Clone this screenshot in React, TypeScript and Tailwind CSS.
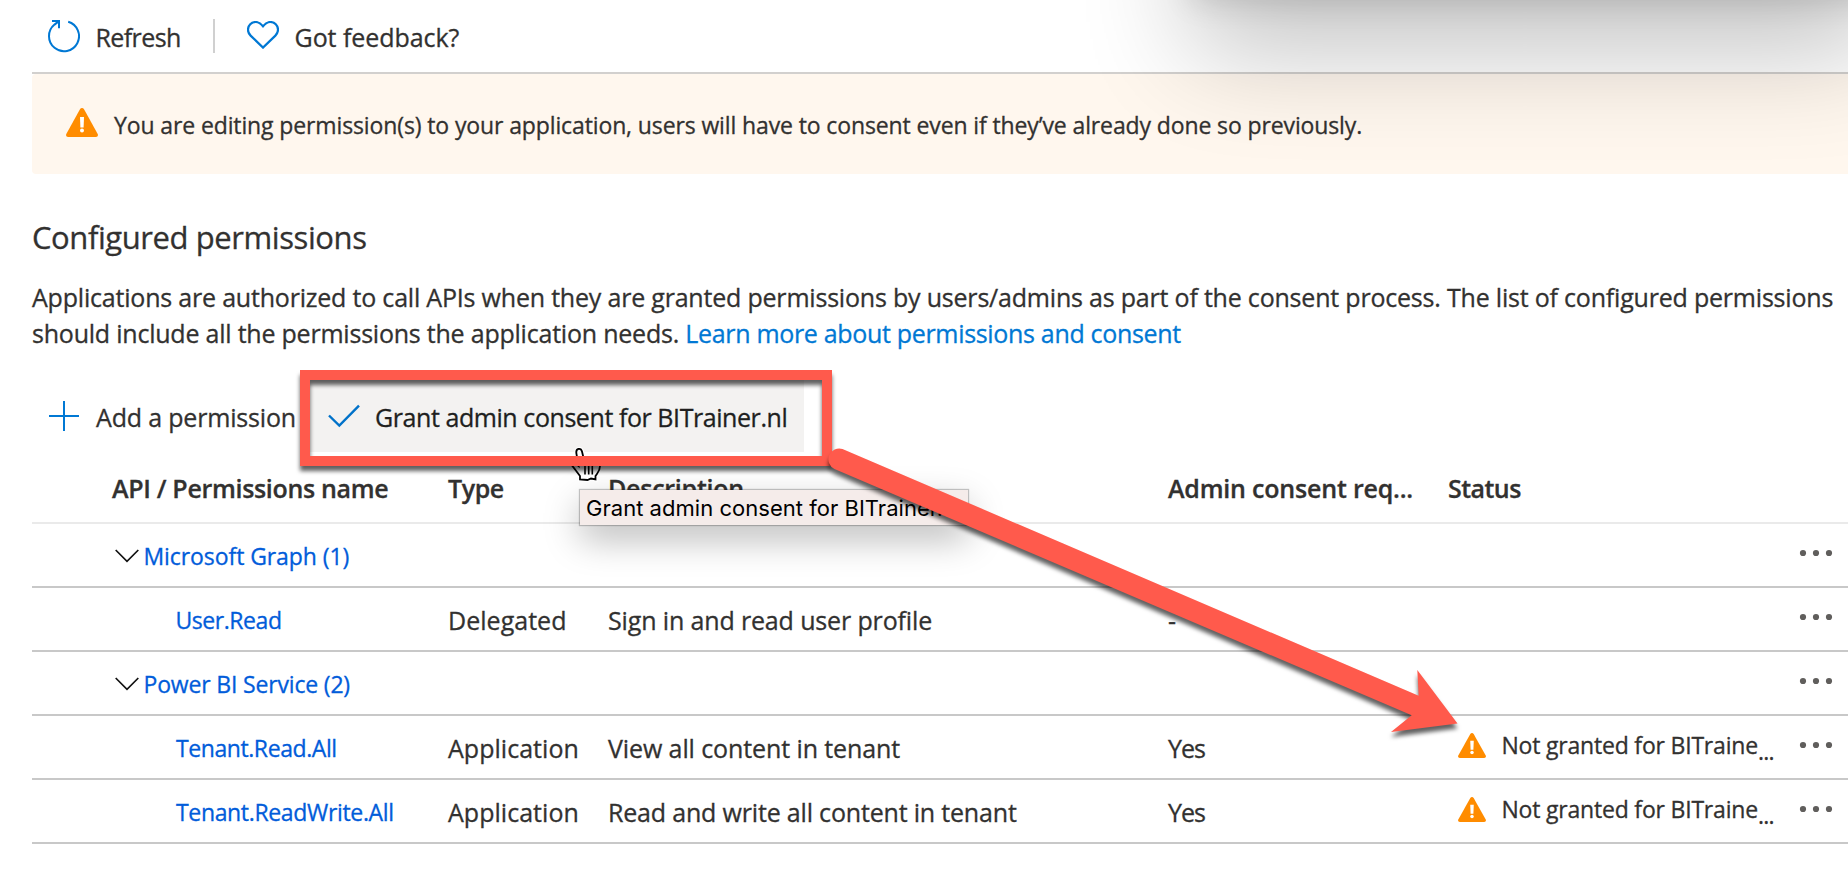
import type { ReactNode } from "react";

function RefreshIcon() {
  return (
    <svg width="32" height="33" viewBox="0 0 32 33" fill="none" stroke="#0078d4" strokeWidth="2">
      <path d="M20.2 1.800A15 15 0 1 1 6.500 4.600L10.600 1.400" />
      <path d="M4 1H11V8.2" />
    </svg>
  );
}

function HeartIcon() {
  return (
    <svg width="32" height="28" viewBox="0 0 32 28" fill="none" stroke="#0078d4" strokeWidth="2.2">
      <path d="M16 5.2C13.5 2.2 11.5 1 8.8 1C4.3 1 1 4.5 1 8.8C1 11.3 2 13 3.6 14.6L16 26.6L28.4 14.6C30 13 31 11.3 31 8.8C31 4.5 27.7 1 23.2 1C20.5 1 18.5 2.2 16 5.2Z" />
    </svg>
  );
}

function WarningIcon({ width, height }: { width: number; height: number }) {
  return (
    <svg width={width} height={height} viewBox="0 0 32 29" preserveAspectRatio="none" className="shrink-0">
      <path
        d="M14.1 1.1C14.9-.3 17.1-.3 17.9 1.1L31.7 26C32.4 27.4 31.5 29 29.9 29H2.1C.5 29-.4 27.4.3 26Z"
        fill="#ff8c00"
      />
      <path d="M14 9H18L17.6 19.4H14.4Z" fill="#fff" />
      <circle cx="16" cy="22.6" r="2" fill="#fff" />
    </svg>
  );
}

function ChevronIcon() {
  return (
    <svg width="24" height="14" viewBox="0 0 24 14" fill="none" stroke="#111" strokeWidth="1.7">
      <path d="M.7 1L12 12.3L23.3 1" />
    </svg>
  );
}

function MoreIcon() {
  return (
    <svg width="34" height="8" viewBox="0 0 34 8" fill="#605e5c">
      <circle cx="4" cy="4" r="3.1" />
      <circle cx="17" cy="4" r="3.1" />
      <circle cx="30" cy="4" r="3.1" />
    </svg>
  );
}

function NotGranted() {
  return (
    <div className="relative -top-[2px] flex items-center pl-[10px]">
      <WarningIcon width={28} height={25} />
      <span className="ml-[15.5px] text-[23px] tracking-[-0.2px]">Not granted for BITraine</span>
      <span className="relative top-[6px] text-[23px] tracking-[-0.7px]">...</span>
    </div>
  );
}

const columns = "grid grid-cols-[416px_160px_560px_280px_1fr]";

function Row({ name, type, description, consent, status }: {
  name: ReactNode;
  type?: ReactNode;
  description?: ReactNode;
  consent?: ReactNode;
  status?: ReactNode;
}) {
  return (
    <div className={`${columns} h-[64px] items-center border-b-2 border-[#c8c8c8] text-[25px] leading-[36px]`}>
      <div className="pt-[2px] text-[23px] text-[#015cda]">{name}</div>
      <div className="pt-[2px] tracking-[0.03px]">{type}</div>
      <div className="pt-[2px]">{description}</div>
      <div className="pt-[2px]">{consent}</div>
      <div className="flex items-center justify-between pr-[15px]">
        <div>{status}</div>
        <div className="relative -top-[2px]">
          <MoreIcon />
        </div>
      </div>
    </div>
  );
}

export default function App() {
  return (
    <div className="relative h-[894px] w-[1848px] overflow-hidden bg-white pl-[32px] font-['Open_Sans','Noto_Sans',sans-serif] text-[#323130] [-webkit-text-stroke:0.3px]">
      <header className="flex h-[74px] items-start border-b-2 border-[#d2d0ce] pt-[19px] pl-[16px] text-[25px] leading-[36px]">
        <div className="flex items-start">
          <span className="pt-[1px]"><RefreshIcon /></span>
          <span className="ml-[15.500px] w-[117.500px] tracking-[-0.6px]">Refresh</span>
        </div>
        <div className="h-[34px] w-[2px] bg-[#d0d0d0]" />
        <div className="ml-[32px] flex items-start">
          <span className="pt-[2px]"><HeartIcon /></span>
          <span className="ml-[15.5px] tracking-[-0.05px]">Got feedback?</span>
        </div>
      </header>

      <section className="flex h-[100px] items-start rounded-l-[4px] bg-[#fff7ee] pt-[34px] pl-[34px]">
        <WarningIcon width={32} height={29} />
        <p className="ml-[16px] -mt-px text-[23px] leading-[36px] tracking-[-0.12px] whitespace-nowrap">
          You are editing permission(s) to your application, users will have to consent even if they’ve already done so previously.
        </p>
      </section>

      <h2 className="mt-[43px] text-[31px] leading-[40px] tracking-[-0.42px]">Configured permissions</h2>

      <div className="mt-[22px] text-[25px] leading-[36px] tracking-[-0.2px] whitespace-nowrap">
        <p>Applications are authorized to call APIs when they are granted permissions by users/admins as part of the consent process. The list of configured permissions</p>
        <p className="tracking-[-0.22px]">
          should include all the permissions the application needs.{" "}
          <a className="tracking-[-0.32px] text-[#0078d4]">Learn more about permissions and consent</a>
        </p>
      </div>

      <div className="mt-[29px] flex h-[72px] text-[25px] leading-[36px] whitespace-nowrap">
        <div className="flex w-[272px] items-center pl-[17px]">
          <svg width="30" height="30" viewBox="0 0 30 30" stroke="#0078d4" strokeWidth="2" className="shrink-0">
            <path d="M15 0V30M0 15H30" />
          </svg>
          <span className="ml-[17px] pt-[2px] tracking-[-0.18px]">Add a permission</span>
        </div>
        <div className="flex w-[500px] items-center bg-[#f3f2f1] pl-[24px] text-[#201f1e]">
          <svg width="32" height="24" viewBox="0 0 32 24" fill="none" stroke="#0072c9" strokeWidth="2.4" className="shrink-0">
            <path d="M1 11.5L11.3 21.6L31 1.6" />
          </svg>
          <span className="ml-[15px] pt-[2px] tracking-[-0.43px]">Grant admin consent for BITrainer.nl</span>
        </div>
      </div>

      <div className={`${columns} h-[72px] border-b-2 border-[#eaeaea] pt-[18px] text-[25px] leading-[36px] font-semibold`}>
        <div className="pl-[80px] tracking-[-0.32px]">API / Permissions name</div>
        <div className="tracking-[-0.4px]">Type</div>
        <div className="tracking-[-0.25px]">Description</div>
        <div className="tracking-[-0.2px]">Admin consent req...</div>
        <div className="tracking-[-0.55px]">Status</div>
      </div>

      <Row name={<div className="flex items-center gap-[4.500px] pl-[83px]"><ChevronIcon /><span className="tracking-[-0.08px]">Microsoft Graph (1)</span></div>} />
      <Row
        name={<span className="pl-[143.500px] tracking-[-0.45px]">User.Read</span>}
        type="Delegated"
        description={<span className="tracking-[-0.14px]">Sign in and read user profile</span>}
        consent="-"
      />
      <Row name={<div className="flex items-center gap-[4.500px] pl-[83px]"><ChevronIcon /><span className="tracking-[-0.17px]">Power BI Service (2)</span></div>} />
      <Row
        name={<span className="pl-[144px] tracking-[-0.42px]">Tenant.Read.All</span>}
        type="Application"
        description={<span className="tracking-[-0.1px]">View all content in tenant</span>}
        consent={<span className="tracking-[-1px]">Yes</span>}
        status={<NotGranted />}
      />
      <Row
        name={<span className="pl-[144px] tracking-[-0.34px]">Tenant.ReadWrite.All</span>}
        type="Application"
        description={<span className="tracking-[-0.18px]">Read and write all content in tenant</span>}
        consent={<span className="tracking-[-1px]">Yes</span>}
        status={<NotGranted />}
      />

      {/* Shadow cast by the window above */}
      <div className="pointer-events-none absolute top-0 left-0 h-[174px] w-[1848px] overflow-hidden">
        <div className="absolute -top-[300px] left-[1192px] h-[294px] w-[690px] shadow-[0_56px_110px_rgba(0,0,0,0.24),0_6px_30px_rgba(0,0,0,0.14)]" />
      </div>

      {/* Tooltip */}
      <div className="absolute top-[490px] left-[580px] h-[35px] w-[388px] bg-[#f5ecea] pl-[6px] font-['Inter',sans-serif] text-[22px] leading-[36px] tracking-[0.03px] whitespace-nowrap text-black shadow-[0_0_1px_1px_rgba(0,0,0,0.22),0_14px_36px_rgba(0,0,0,0.28)] [-webkit-text-stroke:0px]">
        Grant admin consent for BITrainer.nl
      </div>

      {/* Pointer */}
      <svg className="absolute top-[444px] left-[566px]" width="40" height="42" viewBox="566 444 40 42" fill="none">
        <path
          d="M580 479.5V476L575.5 470L571.3 464.5C570.6 462.5 573 461.5 575 463L578.5 466L576.3 453C575.8 448 581 447.500 582 451.500L584 460C586 458 589 459 589.5 461C591.500 459.500 594.500 460.500 595 463C597.500 462 600 463.500 600 466C600 471 597.500 473 595.500 476V479.500L591 478.500L587.500 480Z"
          fill="#fff" stroke="#fff" strokeWidth="4"
        />
        <path
          d="M580 479.5V476L575.5 470L571.3 464.5C570.6 462.5 573 461.5 575 463L578.5 466L576.3 453C575.8 448 581 447.500 582 451.500L584 460C586 458 589 459 589.5 461C591.500 459.500 594.500 460.500 595 463C597.500 462 600 463.500 600 466C600 471 597.500 473 595.500 476V479.500L591 478.500L587.500 480Z"
          fill="#fff" stroke="#000" strokeWidth="1.8"
        />
        <path d="M585 465V474.500M588.700 465V474.500M592.300 465V474.500" stroke="#000" strokeWidth="1.6" />
      </svg>

      {/* Callout frame and arrow */}
      <svg className="absolute top-0 left-0" width="1848" height="894" viewBox="0 0 1848 894">
        <g className="drop-shadow-[0_5px_2px_rgba(0,0,0,0.62)]">
          <rect x="305" y="375" width="522" height="86" fill="none" stroke="#ff5a4c" strokeWidth="10" />
        </g>
        <g className="drop-shadow-[0_5px_2px_rgba(0,0,0,0.62)]">
          <path
            d="M842.500 449L1418.700 695.700L1417.300 670L1457.500 723.500L1391 732L1411.700 715.300L834.500 469A10.800 10.800 0 0 1 842.500 449Z"
            fill="#ff5a4c"
          />
        </g>
      </svg>
    </div>
  );
}
